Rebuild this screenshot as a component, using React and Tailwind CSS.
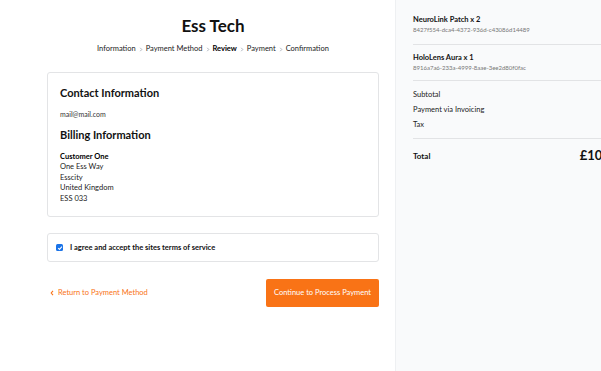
import React from "react";

const font = { fontFamily: 'Lato, "Noto Sans", sans-serif' };

function Sep() {
  return (
    <svg className="mx-[3px]" width="4" height="5" viewBox="0 0 4 5">
      <path d="M1.2 0.8 L2.8 2.5 L1.2 4.2" stroke="#9ca3af" strokeWidth="0.8" fill="none" />
    </svg>
  );
}

export default function App() {
  return (
    <div className="w-[601px] h-[371px] overflow-hidden bg-white flex text-[#111]" style={font}>
      <div className="w-[395px] shrink-0 pl-[47px] pt-[15px]">
        <div className="w-[332px] flex flex-col">
          <div className="flex flex-col items-center">
            <h1 className="text-[17px] font-bold leading-[22px]">Ess Tech</h1>
            <div className="flex items-center text-[7.5px] leading-[10px] mt-[7px] text-[#222]">
              <span>Information</span>
              <Sep />
              <span>Payment Method</span>
              <Sep />
              <span className="font-bold text-black">Review</span>
              <Sep />
              <span>Payment</span>
              <Sep />
              <span>Confirmation</span>
            </div>
          </div>
          <div className="mt-[18px] border border-[#e3e4e6] rounded-[3px] px-[12px] pt-[12px] pb-[12px]">
            <div className="text-[11px] font-bold leading-[16px]">Contact Information</div>
            <div className="text-[7px] leading-[10px] mt-[8px] text-[#333]">mail@mail.com</div>
            <div className="text-[11px] font-bold leading-[16px] mt-[8px]">Billing Information</div>
            <div className="text-[7.5px] leading-[10.4px] mt-[9px] text-[#222]">
              <div className="font-bold text-black">Customer One</div>
              <div>One Ess Way</div>
              <div>Esscity</div>
              <div>United Kingdom</div>
              <div>ESS 033</div>
            </div>
          </div>
          <div className="mt-[16px] border border-[#e3e4e6] rounded-[3px] h-[29px] flex items-center px-[8px]">
            <span className="w-[7px] h-[7px] rounded-[1.5px] bg-[#1a73e8] flex items-center justify-center">
              <svg width="6" height="6" viewBox="0 0 10 10"><path d="M2 5.2 L4.2 7.3 L8.2 2.8" stroke="white" strokeWidth="1.8" fill="none" /></svg>
            </span>
            <span className="ml-[7px] text-[7.5px] font-bold">I agree and accept the sites terms of service</span>
          </div>
          <div className="mt-[17px] flex items-center justify-between">
            <span className="text-[7.5px] text-[#f97316] flex items-center ml-[3px]">
              <svg className="mr-[4px]" width="4" height="6" viewBox="0 0 4 6">
                <path d="M3 0.8 L1.2 3 L3 5.2" stroke="#f97316" strokeWidth="1.1" fill="none" />
              </svg>
              Return to Payment Method
            </span>
            <button className="w-[113px] h-[28px] bg-[#f97316] rounded-[2px] text-white text-[7.5px]">Continue to Process Payment</button>
          </div>
        </div>
      </div>
      <div className="w-[253px] shrink-0 bg-[#f9fafb] border-l border-[#eef0f2] pl-[17px] pr-[18px] pt-[14px]">
        <div className="flex justify-between items-start">
          <div>
            <div className="text-[7.5px] font-bold leading-[11px]">NeuroLink Patch x 2</div>
            <div className="text-[6px] text-[#777] leading-[9px]">8427f554-dca4-4372-936d-c43086d14489</div>
          </div>
          <div className="text-[7.5px] text-[#f0a45a] leading-[11px] mt-[1px]">£72.00</div>
        </div>
        <div className="border-t border-[#e2e3e5] mt-[10px]" />
        <div className="flex justify-between items-start mt-[7px]">
          <div>
            <div className="text-[7.5px] font-bold leading-[11px]">HoloLens Aura x 1</div>
            <div className="text-[6px] text-[#777] leading-[9px]">8916a7a6-233a-4999-8aae-3ee2d80f0fac</div>
          </div>
          <div className="text-[7.5px] text-[#f0a45a] leading-[11px] mt-[1px]">£36.00</div>
        </div>
        <div className="border-t border-[#e2e3e5] mt-[8px]" />
        <div className="text-[7.5px] leading-[15px] mt-[6px] text-[#222]">
          <div className="flex justify-between"><span>Subtotal</span><span className="text-[#f0a45a]">£90.00</span></div>
          <div>Payment via Invoicing</div>
          <div>Tax</div>
        </div>
        <div className="border-t border-[#e2e3e5] mt-[6px]" />
        <div className="flex justify-between items-center mt-[8px] h-[18px]">
          <span className="text-[8px] font-bold">Total</span>
          <span className="text-[13px] font-bold mr-[2px]">£108.00</span>
        </div>
      </div>
    </div>
  );
}
